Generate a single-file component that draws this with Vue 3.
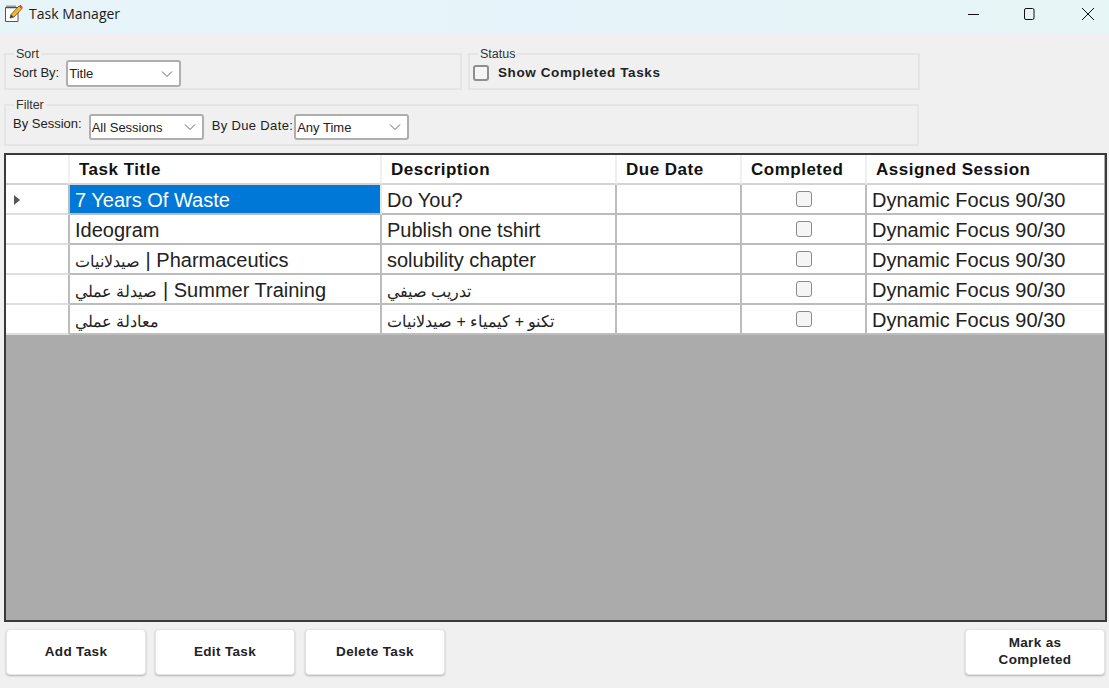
<script setup>
const columns = ['Task Title', 'Description', 'Due Date', 'Completed', 'Assigned Session']

const tasks = [
  { id: 1, title: '7 Years Of Waste', description: 'Do You?', session: 'Dynamic Focus 90/30' },
  { id: 2, title: 'Ideogram', description: 'Publish one tshirt', session: 'Dynamic Focus 90/30' },
  { id: 3, title: 'صيدلانيات | Pharmaceutics', description: 'solubility chapter', session: 'Dynamic Focus 90/30' },
  { id: 4, title: 'صيدلة عملي | Summer Training', description: 'تدريب صيفي', session: 'Dynamic Focus 90/30' },
  { id: 5, title: 'معادلة عملي', description: 'تكنو + كيمياء + صيدلانيات', session: 'Dynamic Focus 90/30' }
]

// arabic runs get a smaller size, the fallback font is wider than the latin one
const splitText = (text) =>
  text
    .split(/([\u0600-\u06FF]+(?: \+? ?[\u0600-\u06FF]+)*)/)
    .filter(Boolean)
    .map((part) => ({ part, arabic: /[\u0600-\u06FF]/.test(part) }))
</script>

<template>
  <div class="window">
    <header class="title-bar">
      <div class="title-left">
        <svg class="app-icon" width="19" height="19" viewBox="0 0 19 19">
          <path d="M1.500 3.500h12.500v14H1.500z" fill="#fff" stroke="#555" />
          <path d="M3 1.500v3M5 1.500v3M7 1.500v3M9 1.500v3M11 1.500v3" stroke="#444" />
          <path d="M6 14l1-3.500L15 2l3 2.500-8 8.500z" fill="#f2b632" stroke="#6b4a12" stroke-width=".8" />
          <path d="M15 2l3 2.500 .8-1.300L16.500.8z" fill="#d9483b" />
          <path d="M6 14l1-3.500 2.500 2.200z" fill="#3a3a3a" />
        </svg>
        <span class="app-title">Task Manager</span>
      </div>
      <div class="controls">
        <svg width="14" height="14" viewBox="0 0 14 14"><path d="M1 7.500h11" stroke="#111" fill="none" /></svg>
        <svg width="14" height="14" viewBox="0 0 14 14"><rect x="2.500" y="1.500" width="9.500" height="11" rx="1.500" stroke="#111" fill="none" /></svg>
        <svg width="14" height="14" viewBox="0 0 14 14"><path d="M1 1l12 12M13 1L1 13" stroke="#111" fill="none" /></svg>
      </div>
    </header>

    <section class="filters">
      <div class="group-row">
        <div class="group sort-group">
          <span class="legend">Sort</span>
          <label class="field-label">Sort By:</label>
          <div class="select">Title
            <svg width="12" height="8" viewBox="0 0 12 8"><path d="M1 1.500l5 5 5-5" stroke="#666" fill="none" /></svg>
          </div>
        </div>
        <div class="group status-group">
          <span class="legend">Status</span>
          <span class="check large"></span>
          <span class="check-label">Show Completed Tasks</span>
        </div>
      </div>
      <div class="group filter-group">
        <span class="legend">Filter</span>
        <label class="field-label session-label">By Session:</label>
        <div class="select">All Sessions
          <svg width="12" height="8" viewBox="0 0 12 8"><path d="M1 1.500l5 5 5-5" stroke="#666" fill="none" /></svg>
        </div>
        <label class="field-label due-label">By Due Date:</label>
        <div class="select">Any Time
          <svg width="12" height="8" viewBox="0 0 12 8"><path d="M1 1.500l5 5 5-5" stroke="#666" fill="none" /></svg>
        </div>
      </div>
    </section>

    <section class="grid">
      <div class="row head">
        <div class="cell row-head"></div>
        <div v-for="col in columns" :key="col" class="cell">{{ col }}</div>
      </div>
      <div v-for="(task, i) in tasks" :key="task.id" class="row">
        <div class="cell row-head">
          <span v-if="i === 0" class="arrow"></span>
        </div>
        <div class="cell" :class="{ selected: i === 0 }">
          <span class="cell-text"><span v-for="(seg, s) in splitText(task.title)" :key="s" :class="{ ar: seg.arabic }">{{ seg.part }}</span></span>
        </div>
        <div class="cell">
          <span class="cell-text"><span v-for="(seg, s) in splitText(task.description)" :key="s" :class="{ ar: seg.arabic }">{{ seg.part }}</span></span>
        </div>
        <div class="cell"></div>
        <div class="cell center"><span class="check"></span></div>
        <div class="cell">{{ task.session }}</div>
      </div>
    </section>

    <footer class="actions">
      <button class="btn">Add Task</button>
      <button class="btn">Edit Task</button>
      <button class="btn delete">Delete Task</button>
      <button class="btn mark">Mark as<br />Completed</button>
    </footer>
  </div>
</template>

<style>
html, body {
  margin: 0;
  background: #f0f0f0;
}
</style>

<style scoped>
.window {
  width: 1109px;
  height: 688px;
  overflow: hidden;
  background: #f0f0f0;
  font-family: "Liberation Sans", Arial, sans-serif;
  color: #111;
}

.title-bar {
  box-sizing: border-box;
  height: 33px;
  padding-bottom: 6px;
  display: flex;
  justify-content: space-between;
  align-items: center;
  background: linear-gradient(90deg, #e7f4f8 0%, #e6f3fa 50%, #e6f5f6 100%);
}

.title-left {
  display: flex;
  align-items: center;
  padding-left: 4px;
}

.app-title {
  font-family: "Open Sans", sans-serif;
  font-size: 14px;
  margin-left: 6px;
  color: #1a1a1a;
}

.controls {
  display: flex;
  padding-right: 14px;
}

.controls svg:nth-child(2) {
  margin: 0 45px 0 41px;
}

.filters {
  padding: 20px 0 0 4px;
}

.group-row {
  display: flex;
  gap: 6px;
  margin-bottom: 14px;
}

.group {
  position: relative;
  box-sizing: border-box;
  display: flex;
  border: 2px solid #e5e5e5;
}

.sort-group {
  width: 458px;
  height: 37px;
  padding-left: 7px;
  align-items: flex-start;
}

.status-group {
  width: 452px;
  height: 37px;
  padding: 2px 0 0 3px;
  align-items: center;
}

.filter-group {
  width: 915px;
  height: 42px;
  padding-left: 7px;
  align-items: flex-start;
}

.legend {
  position: absolute;
  left: 8px;
  top: -8px;
  padding: 0 2px;
  background: #f0f0f0;
  font-size: 12.500px;
  line-height: 14px;
  color: #333;
}

.field-label {
  font-size: 13px;
  line-height: 15px;
  margin-top: 10px;
  color: #222;
  white-space: nowrap;
}

.sort-group .select {
  margin: 5px 0 0 7px;
}

.session-label {
  margin-top: 10px;
}

.filter-group .select {
  margin-top: 8px;
  height: 26px;
}

.session-label + .select {
  margin-left: 7px;
}

.due-label {
  margin: 12px 1px 0 8px;
  letter-spacing: .35px;
}

.select {
  box-sizing: border-box;
  width: 115px;
  height: 27px;
  padding: 0 6px 0 1px;
  display: flex;
  justify-content: space-between;
  align-items: center;
  background: #fff;
  border: 2px solid #aeaeae;
  border-radius: 3px;
  font-size: 13px;
  color: #222;
}

.check {
  display: block;
  box-sizing: border-box;
  width: 16px;
  height: 16px;
  border: 1px solid #8a8a8a;
  border-radius: 3px;
  background: #f5f5f5;
}

.check.large {
  border-width: 2px;
  border-color: #8f8f8f;
}

.check-label {
  margin-left: 9px;
  font-size: 13.500px;
  font-weight: bold;
  letter-spacing: .6px;
  color: #222;
}

.grid {
  box-sizing: border-box;
  width: 1103px;
  height: 469px;
  margin: 7px 0 0 4px;
  border: 2px solid #3a3a3a;
  background: #ababab;
}

.row {
  display: grid;
  grid-template-columns: 64px 312px 235px 125px 125px 237px;
  height: 30px;
  background: #fff;
  width: 1098px;
}

.cell {
  box-sizing: border-box;
  display: flex;
  align-items: center;
  padding: 2px 0 0 5px;
  font-size: 20px;
  color: #222;
  white-space: nowrap;
  border-right: 2px solid #bcbcbc;
  border-bottom: 2px solid #bcbcbc;
}

.cell:last-child {
  border-right: none;
}

.ar {
  font-size: 16px;
}

.head .cell {
  padding: 2px 0 0 9px;
  font-size: 17px;
  font-weight: bold;
  letter-spacing: .5px;
  color: #111;
  border-right: 2px solid #efefef;
  border-bottom: 2px solid #d4d4d4;
}

.head .cell:last-child {
  border-right: none;
}

.row-head {
  position: relative;
  padding: 0;
  border-bottom-color: #dedede;
}

.center {
  justify-content: center;
  padding: 0;
}

.selected {
  background: #0078d7;
  color: #fff;
  border-right-color: #dfeaf5;
}

.arrow {
  position: absolute;
  left: 8px;
  top: 10px;
  width: 0;
  height: 0;
  border-left: 6px solid #555;
  border-top: 5px solid transparent;
  border-bottom: 5px solid transparent;
}

.actions {
  display: flex;
  gap: 9px;
  padding: 7px 4px 0 6px;
}

.btn {
  box-sizing: border-box;
  width: 140px;
  height: 46px;
  padding: 0 0 2px;
  background: #fff;
  border: 1px solid #e4e4e4;
  border-radius: 4px;
  box-shadow: 0 1px 2px rgba(0, 0, 0, .25);
  font-family: "Liberation Sans", Arial, sans-serif;
  font-size: 13.500px;
  font-weight: bold;
  letter-spacing: .35px;
  line-height: 17px;
  color: #222;
}

.delete {
  margin-left: 1px;
}

.mark {
  margin-left: auto;
}
</style>
